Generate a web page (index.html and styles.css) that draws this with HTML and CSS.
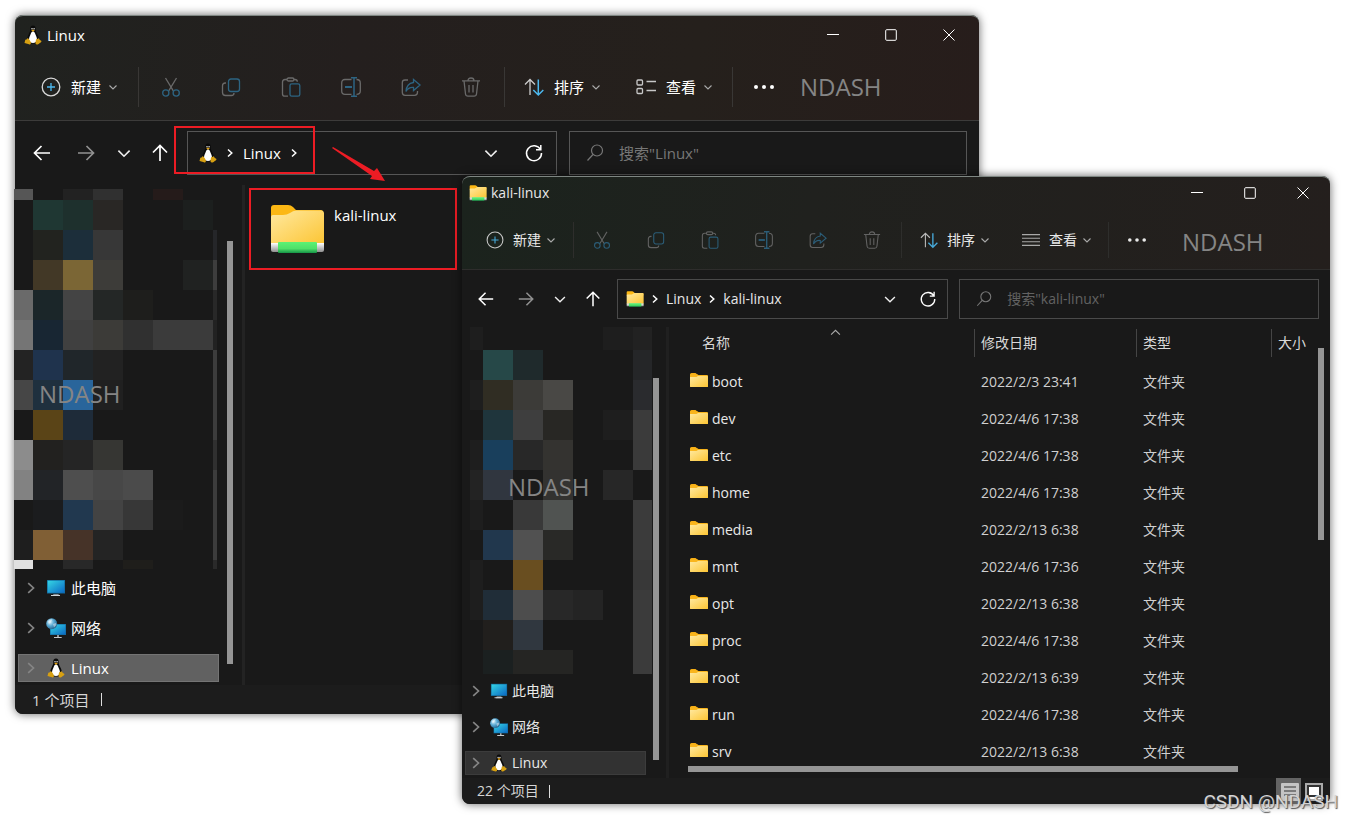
FILE: index.html
```html
<!DOCTYPE html>
<html lang="zh-CN">
<head>
<meta charset="utf-8">
<title>Linux - kali-linux</title>
<link rel="stylesheet" href="styles.css">
</head>
<body>
<svg class="defs" aria-hidden="true">
  <defs>
    <linearGradient id="g-folder" x1="0" y1="0" x2="1" y2="1"><stop offset="0" stop-color="#ffe9a0"/><stop offset="1" stop-color="#fcc534"/></linearGradient>
    <linearGradient id="g-green" x1="0" y1="0" x2="0" y2="1"><stop offset="0" stop-color="#5cf274"/><stop offset=".6" stop-color="#4fe069"/><stop offset="1" stop-color="#159447"/></linearGradient>
    <linearGradient id="g-pipe" x1="0" y1="0" x2="0" y2="1"><stop offset="0" stop-color="#fff"/><stop offset="1" stop-color="#8f8f8f"/></linearGradient>
    <linearGradient id="g-screen" x1="0" y1="0" x2="1" y2="1"><stop offset="0" stop-color="#35d6e4"/><stop offset="1" stop-color="#0b68c4"/></linearGradient>
    <radialGradient id="g-globe" cx=".35" cy=".35" r=".7"><stop offset="0" stop-color="#d9f1fb"/><stop offset=".5" stop-color="#5aa9d2"/><stop offset="1" stop-color="#225f8a"/></radialGradient>
    <symbol id="tux" viewBox="0 0 18 20">
      <path d="M9 .5C7 .5 6.100 2 6.300 4.500 6.400 6.500 5.500 7.500 4.600 9.400 3.600 11.500 3 13.500 3.500 15.500L6 18.500h6l2.500-3c.6-2.200-.1-4.200-1.200-6.200C12.400 7.500 11.700 6.500 11.700 4.500 11.800 2 11 .5 9 .5z" fill="#0a0a0a"/>
      <path d="M9 6.500c-1 0-1.600.6-2 1.800-.7 1.900-2 3.700-2 6.200 0 2.200 1.800 3.500 4 3.500s4-1.300 4-3.500c0-2.500-1.300-4.300-2-6.200-.4-1.200-1-1.800-2-1.800z" fill="#fff"/>
      <circle cx="8" cy="3.800" r=".8" fill="#ddd"/><circle cx="10.100" cy="3.800" r=".8" fill="#ddd"/>
      <path d="M7.200 5.400 9 4.500l1.900.9L9 6.800z" fill="#e0a010"/>
      <path d="M3.600 13.300c.9-.2 1.500 1 2.300 2.300.8 1.200 1.600 2.300.7 3.300-1 1-2.300.2-3.500-.1-1-.3-2.300-.2-2.500-1-.2-.7.5-1.300.5-2 0-1 .6-1 1.300-1.200.6-.2.700-1.200 1.200-1.300zM14.400 13.300c.7.100.8.900 1.200 1.400.4.500 1.800.9 1.900 1.600.1.900-1.500 1.500-2.300 2.100-.9.700-1.900 1.600-3 .9-1.100-.6-.7-1.900-.5-3 .2-1.200.3-2.300.9-2.400.6 0 1 .3 1.800-.6z" fill="#d7a012"/>
    </symbol>
    <symbol id="folder" viewBox="0 0 18 15">
      <path d="M0 1.500Q0 0 1.500 0h4L8 2H0z" fill="#f7ae14"/><path d="M0 1.500h7.500L8.500 2H17q1 0 1 1v11H0z" fill="#f9b51d"/>
      <path d="M0 4h6.500L8 3h9q1 0 1 1v9q0 1-1 1H1q-1 0-1-1z" fill="url(#g-folder)"/>
    </symbol>
    <symbol id="folder-net" viewBox="0 0 54 50">
      <path d="M1 4q0-3 3-3h14q3 0 5 2l3 3h25q2 0 2 2v6H1z" fill="#fcb814"/>
      <path d="M1 13q0-2 2-2h10q4 0 7-2 3-2.500 6-2.500h25q3 0 3 3V40H1z" fill="url(#g-folder)"/>
      <path d="M1 39h53v7q0 2-2 2H3q-2 0-2-2z" fill="url(#g-pipe)"/>
      <rect x="8" y="38" width="39" height="11" rx="1" fill="url(#g-green)"/>
    </symbol>
    <symbol id="pc" viewBox="0 0 20 20">
      <path d="M7.500 16.200h5l.8 1.800H6.500z" fill="#a9b1b8"/><rect x="5" y="17" width="9" height="1" fill="#cfd4d8"/>
      <rect x="1" y="2" width="18" height="13.500" fill="#126a9d"/><rect x="1.700" y="2.700" width="16.600" height="12" fill="url(#g-screen)"/>
    </symbol>
    <symbol id="net" viewBox="0 0 20 20">
      <rect x="4" y="6" width="16" height="11" fill="#126a9d"/><rect x="4.600" y="6.600" width="14.800" height="9.800" fill="url(#g-screen)"/>
      <path d="M11.300 17h1.400v2h3v1H8v-1h3.300z" fill="#c4c9cd"/>
      <circle cx="5.700" cy="5.700" r="5.500" fill="url(#g-globe)"/><path d="M2 3.500Q4 1 6.500 1.200L5 4 3 6zM7 6l3-1 .5 2L8 9.500z" fill="#fff" opacity=".45"/>
    </symbol>
    <symbol id="plus" viewBox="0 0 20 20"><circle cx="10" cy="10" r="8.800" stroke="#d8d8d8"/><path d="M10 6v8M6 10h8" stroke="#4cb8ee"/></symbol>
    <symbol id="cut" viewBox="0 0 20 20"><path d="M4.500 1l7.800 12.800M15.500 1L7.700 13.800" stroke="#6a6a6a"/><g stroke="#2d6482"><circle cx="4.800" cy="16" r="3.100"/><circle cx="15.200" cy="16" r="3.100"/></g></symbol>
    <symbol id="copy" viewBox="0 0 20 20"><path d="M5 6H4.200Q1.500 6 1.500 8.700v6.800Q1.500 18.500 4.500 18.500h6q2.500 0 2.500-2.500" stroke="#6a6a6a"/><rect x="7.500" y="2" width="11" height="12.500" rx="2.500" stroke="#2d6482"/></symbol>
    <symbol id="paste" viewBox="0 0 20 20"><path d="M6 2.500H4Q1.500 2.500 1.500 5v12q0 2.200 2.500 2.200h3M12.500 2.500h1.500q2.300 0 2.300 2.200" stroke="#6a6a6a"/><rect x="6" y="1" width="7" height="3" rx="1.500" stroke="#6a6a6a"/><rect x="9" y="6.800" width="9.800" height="12.400" rx="1.800" stroke="#2d6482"/></symbol>
    <symbol id="rename" viewBox="0 0 20 20"><path d="M10.500 2.500H4Q.7 2.500.7 6v8q0 3.300 3.300 3.300h6.500M15.500 2.500q3.800 0 3.800 3.500v8q0 3.300-3.800 3.300" stroke="#6a6a6a"/><path d="M4 10h7" stroke="#2d6482" stroke-width="2"/><path d="M10 .8h6M10 19.200h6M13 .8v18.400" stroke="#2d6482" stroke-width="1.500"/></symbol>
    <symbol id="share" viewBox="0 0 20 20"><path d="M7 3H4Q1.300 3 1.300 5.700v9.600Q1.300 18.300 4 18.300h9.500q3 0 3-3V14" stroke="#6a6a6a"/><path d="M12.500 2.500l6.500 5.500-6.500 5.500V10.500Q7.500 10 5 14.500 5.500 6.500 12.500 5.500z" stroke="#2d6482"/></symbol>
    <symbol id="trash" viewBox="0 0 20 20"><path d="M1 3.800h18M7 3.800Q7 1 10 1t3 2.800M3 3.800l1.500 13.200q.3 2.200 2.500 2.200h6q2.200 0 2.500-2.200L17 3.800M8 8v7.500M12 8v7.500" stroke="#6a6a6a"/></symbol>
    <symbol id="sort" viewBox="0 0 20 20"><path d="M6 18V2.500M1 7.500l5-5 5 5" stroke="#ccc"/><path d="M14.300 2.500v15M9.300 13l5 5 5-5" stroke="#4cb8ee" stroke-width="1.500"/></symbol>
    <symbol id="view-tiles" viewBox="0 0 20 20"><g stroke="#c8c8c8"><rect x="1" y="3" width="5.500" height="5" rx="1"/><rect x="1" y="11.500" width="5.500" height="5" rx="1"/><path d="M10.500 4.500H20M10.500 13.500H20"/></g></symbol>
    <symbol id="view-rows" viewBox="0 0 20 20"><path d="M0 4h20M0 8h20M0 12h20M0 16h20" stroke="#b8b8b8"/></symbol>
    <symbol id="dots" viewBox="0 0 20 20"><g fill="#fff" stroke="none"><circle cx="2" cy="10" r="2"/><circle cx="10" cy="10" r="2"/><circle cx="18" cy="10" r="2"/></g></symbol>
    <symbol id="down" viewBox="0 0 10 10"><path d="M1.500 3.500L5 7l3.500-3.500"/></symbol>
    <symbol id="up-chev" viewBox="0 0 10 10"><path d="M1 7l4-4 4 4"/></symbol>
    <symbol id="right" viewBox="0 0 10 10"><path d="M3 1.500L6.800 5 3 8.500"/></symbol>
    <symbol id="back" viewBox="0 0 20 20"><path d="M18 10H2.500M9.500 3l-7 7 7 7"/></symbol>
    <symbol id="fwd" viewBox="0 0 20 20"><path d="M2 10h15.500M10.500 3l7 7-7 7"/></symbol>
    <symbol id="up" viewBox="0 0 20 20"><path d="M10 18V2.500M3 9.500l7-7 7 7"/></symbol>
    <symbol id="refresh" viewBox="0 0 20 20"><path d="M16.500 6.500A7.500 7.500 0 1 0 17.500 10M16.800 2v4.800H12"/></symbol>
    <symbol id="search" viewBox="0 0 20 20"><circle cx="12" cy="7.500" r="5.500"/><path d="M8 11.500L2.500 17.500"/></symbol>
    <symbol id="min" viewBox="0 0 12 12"><path d="M0 5.500h12"/></symbol>
    <symbol id="max" viewBox="0 0 12 12"><rect x=".7" y=".7" width="10.600" height="10.600" rx="1"/></symbol>
    <symbol id="close" viewBox="0 0 12 12"><path d="M.5.5l11 11M11.500.5l-11 11"/></symbol>
  </defs>
</svg>

<main class="desktop">
  <section class="window window-back" aria-label="Linux">
    <div class="chrome">
      <header class="titlebar">
        <svg class="app"><use href="#tux"/></svg><h1>Linux</h1>
        <div class="controls">
          <button aria-label="最小化"><svg><use href="#min"/></svg></button>
          <button aria-label="最大化"><svg><use href="#max"/></svg></button>
          <button aria-label="关闭"><svg><use href="#close"/></svg></button>
        </div>
      </header>
      <div class="toolbar">
        <button class="cmd"><svg class="ic"><use href="#plus"/></svg>新建<svg class="chev"><use href="#down"/></svg></button>
        <div class="tools">
          <button aria-label="剪切"><svg class="ic"><use href="#cut"/></svg></button>
          <button aria-label="复制"><svg class="ic"><use href="#copy"/></svg></button>
          <button aria-label="粘贴"><svg class="ic"><use href="#paste"/></svg></button>
          <button aria-label="重命名"><svg class="ic"><use href="#rename"/></svg></button>
          <button aria-label="共享"><svg class="ic"><use href="#share"/></svg></button>
          <button aria-label="删除"><svg class="ic"><use href="#trash"/></svg></button>
        </div>
        <button class="cmd"><svg class="ic"><use href="#sort"/></svg>排序<svg class="chev"><use href="#down"/></svg></button>
        <button class="cmd view"><svg class="ic"><use href="#view-tiles"/></svg>查看<svg class="chev"><use href="#down"/></svg></button>
        <button class="more" aria-label="更多"><svg class="ic"><use href="#dots"/></svg></button>
        <span class="mark">NDASH</span>
      </div>
    </div>
    <div class="navbar">
      <button class="go" aria-label="后退"><svg class="nv"><use href="#back"/></svg></button>
      <button class="go dim" aria-label="前进"><svg class="nv"><use href="#fwd"/></svg></button>
      <button class="recent" aria-label="最近"><svg class="dd"><use href="#down"/></svg></button>
      <button class="upward" aria-label="上移"><svg class="nv"><use href="#up"/></svg></button>
      <div class="address">
        <svg class="app"><use href="#tux"/></svg>
        <svg class="crumb"><use href="#right"/></svg><a href="#linux">Linux</a><svg class="crumb"><use href="#right"/></svg>
        <button class="drop" aria-label="以前的位置"><svg class="dd"><use href="#down"/></svg></button>
        <button class="reload" aria-label="刷新"><svg class="nv"><use href="#refresh"/></svg></button>
      </div>
      <div class="search"><svg class="nv"><use href="#search"/></svg><input type="text" aria-label="搜索" placeholder='搜索"Linux"'></div>
    </div>
    <div class="content">
      <aside class="side">
        <div class="tree">
          <div class="cover"><svg id="cover-back"></svg><span class="mark">NDASH</span></div>
          <a class="node" href="#pc"><svg class="ex"><use href="#right"/></svg><svg class="dev"><use href="#pc"/></svg>此电脑</a>
          <a class="node" href="#net"><svg class="ex"><use href="#right"/></svg><svg class="dev"><use href="#net"/></svg>网络</a>
          <a class="node on" href="#linux"><svg class="ex"><use href="#right"/></svg><svg class="dev"><use href="#tux"/></svg>Linux</a>
        </div>
        <div class="vbar"></div>
      </aside>
      <div class="files">
        <a class="tile" href="#kali"><svg><use href="#folder-net"/></svg><span>kali-linux</span></a>
      </div>
    </div>
    <footer class="status"><span>1 个项目</span><i></i></footer>
    <div class="box-path"></div>
    <svg class="arrow" viewBox="0 0 54 38"><path d="M1 1l-1 1 40 28-2 3 15 2-8-13-3 3z"/></svg>
  </section>

  <section class="window window-front" aria-label="kali-linux">
    <div class="chrome">
      <header class="titlebar">
        <svg class="app"><use href="#folder-net"/></svg><h1>kali-linux</h1>
        <div class="controls">
          <button aria-label="最小化"><svg><use href="#min"/></svg></button>
          <button aria-label="最大化"><svg><use href="#max"/></svg></button>
          <button aria-label="关闭"><svg><use href="#close"/></svg></button>
        </div>
      </header>
      <div class="toolbar">
        <button class="cmd"><svg class="ic"><use href="#plus"/></svg>新建<svg class="chev"><use href="#down"/></svg></button>
        <div class="tools">
          <button aria-label="剪切"><svg class="ic"><use href="#cut"/></svg></button>
          <button aria-label="复制"><svg class="ic"><use href="#copy"/></svg></button>
          <button aria-label="粘贴"><svg class="ic"><use href="#paste"/></svg></button>
          <button aria-label="重命名"><svg class="ic"><use href="#rename"/></svg></button>
          <button aria-label="共享"><svg class="ic"><use href="#share"/></svg></button>
          <button aria-label="删除"><svg class="ic"><use href="#trash"/></svg></button>
        </div>
        <button class="cmd"><svg class="ic"><use href="#sort"/></svg>排序<svg class="chev"><use href="#down"/></svg></button>
        <button class="cmd view"><svg class="ic"><use href="#view-rows"/></svg>查看<svg class="chev"><use href="#down"/></svg></button>
        <button class="more" aria-label="更多"><svg class="ic"><use href="#dots"/></svg></button>
        <span class="mark">NDASH</span>
      </div>
    </div>
    <div class="navbar">
      <button class="go" aria-label="后退"><svg class="nv"><use href="#back"/></svg></button>
      <button class="go dim" aria-label="前进"><svg class="nv"><use href="#fwd"/></svg></button>
      <button class="recent" aria-label="最近"><svg class="dd"><use href="#down"/></svg></button>
      <button class="upward" aria-label="上移"><svg class="nv"><use href="#up"/></svg></button>
      <div class="address">
        <svg class="app"><use href="#folder-net"/></svg>
        <svg class="crumb"><use href="#right"/></svg><a href="#linux">Linux</a><svg class="crumb"><use href="#right"/></svg><a href="#kali">kali-linux</a>
        <button class="drop" aria-label="以前的位置"><svg class="dd"><use href="#down"/></svg></button>
        <button class="reload" aria-label="刷新"><svg class="nv"><use href="#refresh"/></svg></button>
      </div>
      <div class="search"><svg class="nv"><use href="#search"/></svg><input type="text" aria-label="搜索" placeholder='搜索"kali-linux"'></div>
    </div>
    <div class="content">
      <aside class="side">
        <div class="tree">
          <div class="cover"><svg id="cover-front"></svg><span class="mark">NDASH</span></div>
          <a class="node" href="#pc"><svg class="ex"><use href="#right"/></svg><svg class="dev"><use href="#pc"/></svg>此电脑</a>
          <a class="node" href="#net"><svg class="ex"><use href="#right"/></svg><svg class="dev"><use href="#net"/></svg>网络</a>
          <a class="node on" href="#linux"><svg class="ex"><use href="#right"/></svg><svg class="dev"><use href="#tux"/></svg>Linux</a>
        </div>
        <div class="vbar"></div>
      </aside>
      <div class="list">
        <div class="rows">
          <table>
            <colgroup><col class="c-name"><col class="c-date"><col class="c-type"><col></colgroup>
            <thead><tr><th><span class="name-head">名称<svg class="asc"><use href="#up-chev"/></svg></span></th><th>修改日期</th><th>类型</th><th>大小</th></tr></thead>
            <tbody>
              <tr><td><svg><use href="#folder"/></svg>boot</td><td>2022/2/3 23:41</td><td>文件夹</td><td></td></tr>
              <tr><td><svg><use href="#folder"/></svg>dev</td><td>2022/4/6 17:38</td><td>文件夹</td><td></td></tr>
              <tr><td><svg><use href="#folder"/></svg>etc</td><td>2022/4/6 17:38</td><td>文件夹</td><td></td></tr>
              <tr><td><svg><use href="#folder"/></svg>home</td><td>2022/4/6 17:38</td><td>文件夹</td><td></td></tr>
              <tr><td><svg><use href="#folder"/></svg>media</td><td>2022/2/13 6:38</td><td>文件夹</td><td></td></tr>
              <tr><td><svg><use href="#folder"/></svg>mnt</td><td>2022/4/6 17:36</td><td>文件夹</td><td></td></tr>
              <tr><td><svg><use href="#folder"/></svg>opt</td><td>2022/2/13 6:38</td><td>文件夹</td><td></td></tr>
              <tr><td><svg><use href="#folder"/></svg>proc</td><td>2022/4/6 17:38</td><td>文件夹</td><td></td></tr>
              <tr><td><svg><use href="#folder"/></svg>root</td><td>2022/2/13 6:39</td><td>文件夹</td><td></td></tr>
              <tr><td><svg><use href="#folder"/></svg>run</td><td>2022/4/6 17:38</td><td>文件夹</td><td></td></tr>
              <tr><td><svg><use href="#folder"/></svg>srv</td><td>2022/2/13 6:38</td><td>文件夹</td><td></td></tr>
            </tbody>
          </table>
          <div class="vbar"></div>
        </div>
        <div class="hbar"></div>
      </div>
    </div>
    <footer class="status"><span>22 个项目</span><i></i>
      <div class="modes">
        <button class="on" aria-label="详细信息"><svg viewBox="0 0 24 24"><rect x="4" y="4" width="18" height="18" rx="1" fill="#c4c4c4"/><path d="M7 8h12M7 12h12M7 16h12" stroke="#333" stroke-width="1"/></svg></button>
        <button aria-label="大图标"><svg viewBox="0 0 24 24"><rect x="4" y="5" width="16" height="16" fill="#fff" stroke="#aaa" stroke-width="2"/><rect x="6" y="7" width="12" height="10" fill="#fff" stroke="#333" stroke-width="2"/></svg></button>
      </div>
    </footer>
  </section>
  <p class="credit">CSDN @NDASH</p>
</main>
<script src="mosaic.js"></script>
</body>
</html>
```
FILE: styles.css
```css
* { box-sizing: border-box; }
body { margin: 0; background: #fff; font-family: "Open Sans", "Noto Sans CJK SC", sans-serif; }
button { border: 0; padding: 0; margin: 0; background: none; color: inherit; font: inherit; display: flex; align-items: center; justify-content: center; flex: none; }
a { color: inherit; text-decoration: none; }
svg { display: block; flex: none; fill: none; stroke: none; }
.defs { position: absolute; width: 0; height: 0; }
.desktop { position: relative; min-height: 100vh; overflow: hidden; }

.window {
  --fs: 15px; --icon: 20px; --step: 60px; --pad: 26px; --row: 28px;
  position: absolute; display: flex; flex-direction: column;
  background: #191919; color: #fff; font-size: var(--fs); line-height: 20px;
  border-radius: 8px; box-shadow: 0 0 10px rgba(0, 0, 0, .6);
}
.window-back { left: 15px; top: 15px; width: 964px; }
.window-front { --fs: 14px; --icon: 18px; --step: 54px; --pad: 24px; --row: 24px; left: 462px; top: 176px; width: 868px; color: #e8e8e8; }

.chrome { border-top: 1px solid #7e8682; border-bottom: 1px solid #3c3b3a; border-radius: 8px 8px 0 0; background: linear-gradient(100deg, #20221f, #241f1e 35%, #25201c 70%, #271d1b); }
.window-front .chrome { border-bottom-color: #2e2d2c; background: linear-gradient(100deg, #1b231d, #20211e 40%, #241f1d); }
.titlebar { display: flex; align-items: center; height: 37px; padding-left: 9px; }
.window-front .titlebar { height: 31px; padding-left: 7px; }
.titlebar h1 { margin: 0 0 0 5px; font-size: 15px; font-weight: 400; }
.window-front .titlebar h1 { margin-left: 4px; font-size: 14px; }
.app { width: 18px; height: 20px; }
.window-front .app { height: 16px; }
.controls { display: flex; margin: 0 1px 0 auto; }
.controls button { width: 58px; height: 36px; }
.controls svg { width: 12px; height: 12px; stroke: #fff; stroke-width: 1; }
.window-front .controls button { width: 53px; height: 30px; }

.toolbar { display: flex; align-items: center; height: 67px; padding-left: var(--pad); }
.window-front .toolbar { height: 61px; padding-top: 2px; }
.ic { width: var(--icon); height: var(--icon); stroke-width: 1.3; }
.cmd .ic { margin-right: 10px; }
.chev { width: 10px; height: 10px; margin-left: 7px; stroke: #aaa; stroke-width: 1.1; }
.tools { display: flex; height: 40px; margin: 0 19px 0 20px; padding: 0 3px 0 2px; border: solid #393735; border-width: 0 1px; }
.tools button { width: var(--step); }
.cmd.view { margin-left: 35px; }
.more { height: 40px; margin-left: 19px; padding-left: 21px; border-left: 1px solid #393735; }
.mark { font-size: 24px; line-height: 32px; color: #858585; }
.toolbar .mark { margin-left: 26px; }
.window-front .ic { stroke-width: 1.2; opacity: .9; }
.window-front .cmd .ic { margin-right: 9px; }
.window-front .tools { height: 36px; margin: 0 18px 0 17px; padding: 0 2px 0 1px; border-color: #2e2e2c; }
.window-front .chev { margin-left: 5px; }
.window-front .cmd.view { margin-left: 32px; }
.window-front .more { height: 36px; margin-left: 16px; padding-left: 19px; border-color: #2e2e2c; }
.window-front .toolbar .mark { margin: 4px 0 0 36px; }

.navbar { display: flex; align-items: center; height: 64px; padding: 0 12px 0 5px; }
.go { width: 44px; height: 44px; }
.recent { width: 32px; height: 44px; }
.upward { width: 40px; height: 44px; margin-right: 7px; }
.nv { width: 20px; height: 20px; stroke: #fff; stroke-width: 1.7; }
.dim .nv { stroke: #919191; }
.dd { width: 16px; height: 16px; stroke: #eee; stroke-width: 1; }
.address, .search { display: flex; align-items: center; height: 44px; border: 1px solid #565656; }
.address { flex: 15; padding-left: 11px; margin-right: 12px; font-size: 15px; }
.search { flex: 16; padding-left: 15px; }
.search .nv { width: 20px; height: 20px; stroke: #777; stroke-width: 1.2; }
.search input { flex: 1; min-width: 0; margin-left: 14px; padding: 0; border: 0; outline: 0; background: none; color: #fff; font: inherit; }
.search input::placeholder { color: #777; opacity: 1; }
.crumb { width: 10px; height: 10px; margin: 0 8px; stroke: #fff; stroke-width: 1.500; }
.drop { width: 43px; height: 42px; margin-left: auto; }
.reload { width: 44px; height: 42px; }
.reload .nv { stroke-width: 1.5; }
.window-front .navbar { height: 57px; padding: 0 11px 0 4px; }
.window-front .go { width: 40px; }
.window-front .recent { width: 28px; }
.window-front .upward { width: 38px; margin-right: 5px; }
.window-front .nv { width: 18px; height: 18px; }
.window-front .dd { width: 14px; height: 14px; }
.window-front .address, .window-front .search { height: 40px; border-color: #4a4a4a; }
.window-front .address { padding-left: 8px; margin-right: 11px; font-size: 14px; }
.window-front .crumb { margin: 0 6px; }
.window-front .drop { width: 39px; }
.window-front .reload { width: 38px; }
.window-front .search input::placeholder { color: #626262; }

.content { display: flex; flex: 1; min-height: 0; }
.side { display: flex; width: 230px; border-right: 3px solid #232323; }
.tree { width: 204px; display: flex; flex-direction: column; padding: 4px 0 3px; gap: 12px; }
.cover { position: relative; margin: 0 0 -7px -1px; }
.cover .mark { position: absolute; left: 25px; top: 189px; }
.node { display: flex; align-items: center; width: 201px; height: var(--row); margin-left: 3px; padding-left: 5px; border: 1px solid transparent; font-size: var(--fs); }
.ex { width: 14px; height: 14px; margin-right: 8px; stroke: #858585; stroke-width: 1.2; }
.dev { width: 20px; height: 20px; margin-right: 5px; }
.node.on { background: #616161; border-color: #747474; }
.side .vbar { width: 6px; height: 423px; margin: 56px 0 0 8px; background: #959595; }
.window-front .side { width: 207px; border-right-color: #202020; }
.window-front .tree { width: 190px; padding: 0 0 3px; }
.window-front .cover { margin: 0 0 -7px 8px; }
.window-front .cover .mark { left: 38px; top: 144px; }
.window-front .node { width: 181px; padding-left: 3px; }
.window-front .ex { margin-right: 7px; }
.window-front .dev { width: 18px; height: 18px; margin-right: 4px; }
.window-front .node.on { background: #323232; border-color: #3c3c3c; }
.window-front .side .vbar { height: 382px; margin: 51px 0 0 1px; }

.files { flex: 1; padding: 3px 4px; }
.tile { display: flex; width: 208px; height: 82px; padding: 14px 0 0 19px; border: 2px solid #ec1c24; }
.tile svg { width: 54px; height: 50px; margin-right: 10px; }
.tile span { padding-top: 1px; }

.list { display: flex; flex: 1; flex-direction: column; min-width: 0; }
.rows { display: flex; align-items: flex-start; height: 439px; overflow: hidden; }
table { flex: 1; border-collapse: collapse; table-layout: fixed; width: 100%; font-size: 14px; }
.c-name { width: 305px; }
.c-date { width: 162px; }
.c-type { width: 135px; }
th { height: 36px; padding: 0 0 0 7px; vertical-align: top; text-align: left; font-weight: 400; font-size: 14px; line-height: 32px; white-space: nowrap; color: #d8d8d8; background: linear-gradient(#454545, #454545) 0 2px / 1px 28px no-repeat; }
th:first-child { padding-left: 33px; background: none; }
.name-head { display: block; position: relative; }
.asc { position: absolute; left: 128px; top: 0; width: 11px; height: 11px; stroke: #aaa; stroke-width: 1; }
td { height: 37px; padding: 0 0 0 7px; color: #d0d0d0; }
td:first-child { padding-left: 21px; color: #e8e8e8; }
td svg { display: inline-block; width: 18px; height: 15px; margin-right: 4px; vertical-align: -1px; }
.rows .vbar { width: 6px; height: 192px; margin: 21px 6px 0 0; background: #959595; }
.hbar { width: 550px; height: 6px; margin: 0 0 6px 19px; background: #959595; }

.status { display: flex; align-items: center; height: 29px; padding-left: 17px; border-radius: 0 0 8px 8px; background: #1c1c1c; color: #d6d6d6; }
.status i { width: 1px; height: 13px; margin-left: 12px; background: #ddd; }
.window-front .status { height: 26px; padding-left: 15px; }
.window-front .status i { margin-left: 10px; }
.modes { display: flex; margin: 0 4px 0 auto; }
.modes button { width: 25px; height: 26px; }
.modes svg { width: 24px; height: 24px; }
.modes .on { background: #646464; }

.box-path { position: absolute; left: 159px; top: 111px; width: 141px; height: 48px; border: 2px solid #ec1c24; }
.arrow { position: absolute; left: 317px; top: 131px; width: 54px; height: 38px; fill: #ec1c24; }
.credit { position: absolute; right: 15px; bottom: 5px; margin: 0; font: 19px/24px Roboto, sans-serif; color: #d4d4d4; text-shadow: 1px 1px 1px #555; }
```
FILE: mosaic.js
```js
// Pixelated cover over the private folders of each sidebar.
function cover(id, xs, ys, rows) {
  const ns = 'http://www.w3.org/2000/svg';
  const svg = document.getElementById(id);
  svg.setAttribute('width', xs[xs.length - 1]);
  svg.setAttribute('height', ys[ys.length - 1]);
  rows.forEach((row, r) => row.split(' ').forEach((color, c) => {
    if (color === '-') return;
    const rect = document.createElementNS(ns, 'rect');
    rect.setAttribute('x', xs[c]);
    rect.setAttribute('y', ys[r]);
    rect.setAttribute('width', xs[c + 1] - xs[c]);
    rect.setAttribute('height', ys[r + 1] - ys[r]);
    rect.setAttribute('fill', '#' + color);
    svg.appendChild(rect);
  }));
}
cover('cover-back', [0, 19, 49, 79, 109, 139, 169, 199, 203],
  [0, 11, 41, 71, 101, 131, 161, 191, 221, 251, 281, 311, 341, 371, 380], [
  '565656 - 222222 303030 - 251b1a - -',
  '191919 1f3733 1e302d 292725 - - 1c1f1e -',
  '191919 22231f 1c2e3a 373737 - - - 252629',
  '191919 423826 7b6635 3d3c39 - - 202221 3d3d3d',
  '6a6a6a 1b2629 444444 242726 1e1e1c - - 282828',
  '757575 182633 404040 3c3b38 303030 3b3b3b 3b3b3b 222222',
  '232323 1f334d 20262a 222222 - - - 3c3c3c',
  '464646 1f303e 29659b 202020 - - - 3c3c3c',
  '191919 5a4417 1e2b39 - - - - 3c3c3c',
  '8c8c8c 22211f 252525 363633 - - - 303030',
  '828282 222427 4e4e4e 474747 4b4b4b - - 3c3c3c',
  '191919 1b1c1e 21384f 434343 373737 1b1b1b - 3c3c3c',
  '1e1e1e 805f35 463328 242424 - - - 3c3c3c',
  'e0e0e0 - 282828 - 1f1e1b - - 2a2a2a'
]);
cover('cover-front', [0, 13, 43, 73, 103, 133, 163, 182],
  [0, 23, 53, 83, 113, 143, 173, 203, 233, 263, 293, 323, 347], [
  '1e1e1e - - - - 1e1e1e 222222',
  '- 264848 1f2a2c - - - 252628',
  '1e1e1e 302d23 3c3b38 494845 - - 2a2b2e',
  '- 1f353c 3e3e3e 282724 - 1e1e1e 3b3b3b',
  '1e1e1e 193f5c 282828 343330 - - 3a3a3a',
  '232323 30363f 1a1a1a 333230 - 272727 -',
  '1e1e1e - 393939 505351 - - 3b3b3b',
  '- 21374d 515151 292927 - - 3b3b3b',
  '1e1e1e - 694e20 - - - 383838',
  '1e1e1e 202d38 4d4d4d 282828 242424 - 3b3b3b',
  '- 211f1d 30373f - - - 3b3b3b',
  '- 1b2020 252523 252523 - - 3b3b3b'
]);
```
